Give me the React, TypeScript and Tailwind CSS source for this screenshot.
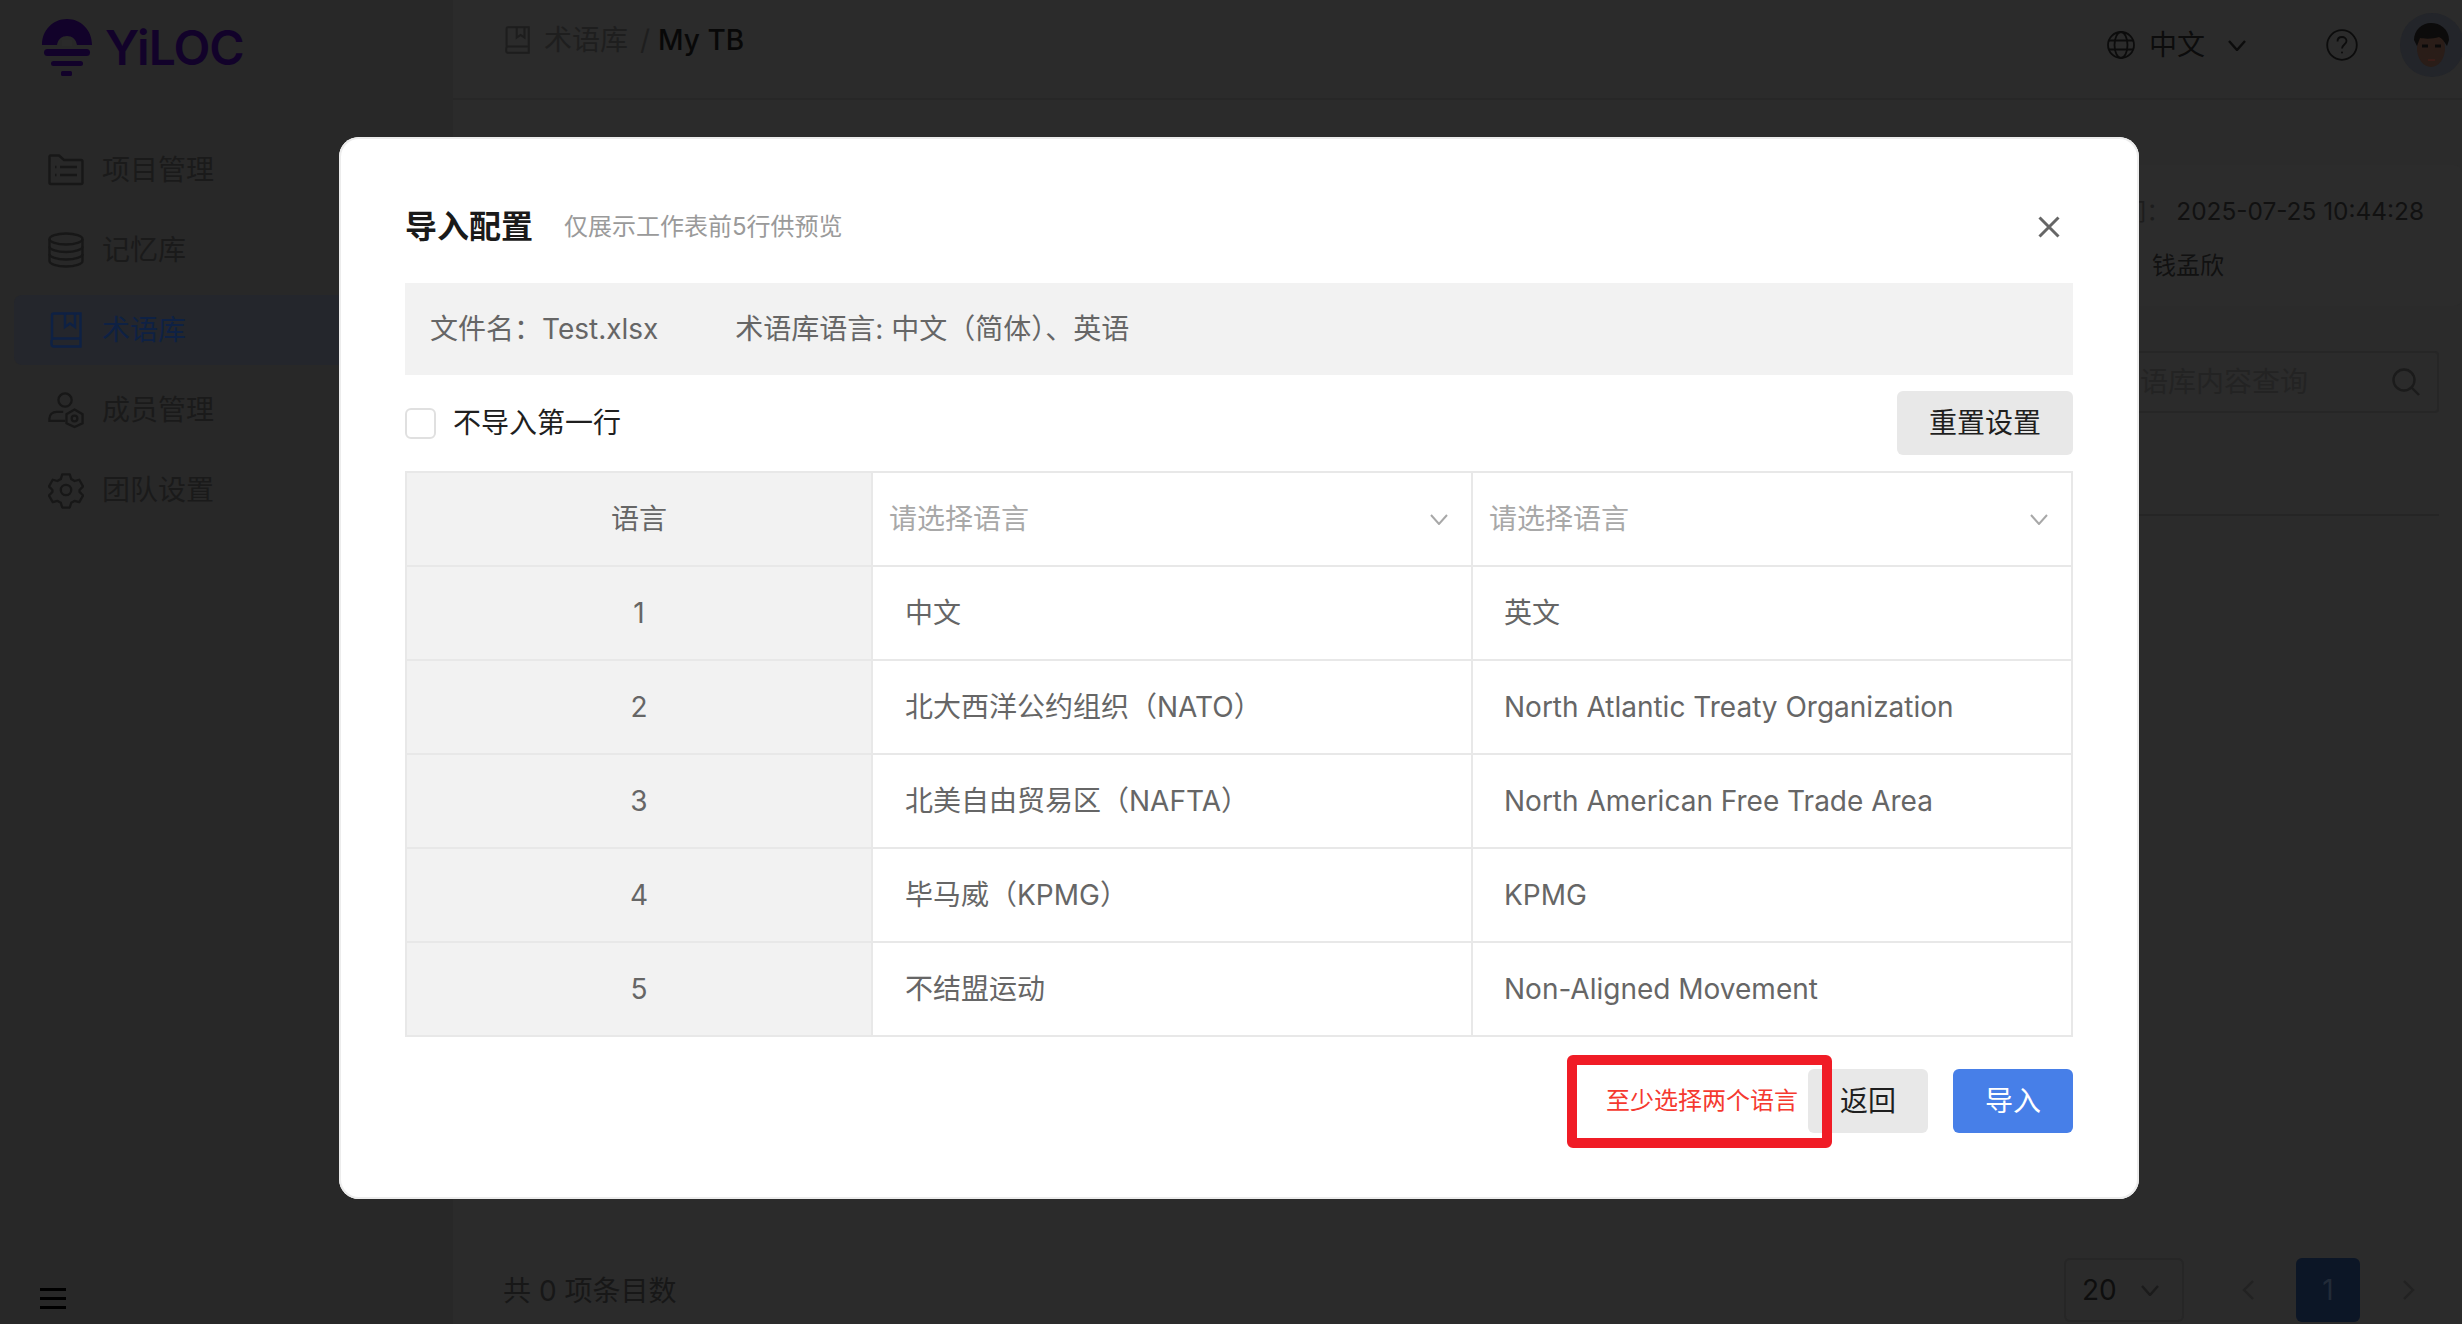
import React from "react";

const Chev = ({ w = 18, h = 11, c = "#a8a8a8", s = 2 }: { w?: number; h?: number; c?: string; s?: number }) => (
  <svg width={w} height={h} viewBox={`0 0 ${w} ${h}`} fill="none" className="shrink-0">
    <path d={`M1 1L${w / 2} ${h - 1}L${w - 1} 1`} stroke={c} strokeWidth={s} />
  </svg>
);

const Logo = () => (
  <svg width="52" height="58" viewBox="0 0 52 58" className="shrink-0">
    <path
      d="M1 27C1 12 12 1 26 1s25 11 25 26H36c-1-6-5-9-10-9s-9 3-10 9Z"
      fill="#12022a"
    />
    <rect x="21" y="22" width="10" height="6" fill="#2a2a2a" />
    <rect x="3" y="31" width="46" height="7" rx="3.5" fill="#12022a" />
    <rect x="10" y="43" width="32" height="5" rx="2.5" fill="#12022a" />
    <rect x="20" y="53" width="11" height="5" rx="1.5" fill="#12022a" />
  </svg>
);

const FolderIcon = () => (
  <svg width="36" height="32" viewBox="0 0 36 32" fill="none" stroke="#171717" strokeWidth="2.4">
    <path d="M1.5 2.5a1 1 0 0 1 1-1h8.5l5 4.5h17a1.5 1.5 0 0 1 1.5 1.5v21a1.5 1.5 0 0 1-1.5 1.5h-30a1.5 1.5 0 0 1-1.5-1.5Z" />
    <path d="M12 13h17M12 21h17M7 13h1.500M7 21h1.500" />
  </svg>
);
const DbIcon = () => (
  <svg width="36" height="36" viewBox="0 0 36 36" fill="none" stroke="#171717" strokeWidth="2.4">
    <ellipse cx="18" cy="7" rx="16.500" ry="5.500" />
    <path d="M1.500 7v22c0 3 7.500 5.500 16.500 5.500s16.500-2.500 16.500-5.500V7" />
    <path d="M1.500 14.500c0 3 7.500 5.500 16.500 5.500s16.500-2.500 16.500-5.500M1.500 22c0 3 7.500 5.500 16.500 5.500s16.500-2.500 16.500-5.500" />
  </svg>
);
const BookIcon = ({ c = "#0e2144", w = 32, h = 36, sw = 2.4 }: { c?: string; w?: number; h?: number; sw?: number }) => (
  <svg width={w} height={h} viewBox="0 0 32 36" fill="none" stroke={c} strokeWidth={sw}>
    <path d="M2 28V3a1.500 1.500 0 0 1 1.500-1.500h27V34.500H4A2.500 2.500 0 0 1 1.500 32V29a2.500 2.500 0 0 1 2.500-2.500h26.500" />
    <path d="M15 1.500V15l5-3.500 5 3.500V1.500" />
  </svg>
);
const MemberIcon = () => (
  <svg width="38" height="38" viewBox="0 0 38 38" fill="none" stroke="#171717" strokeWidth="2.4">
    <circle cx="18" cy="8.500" r="7" />
    <path d="M16 21H9c-4.500 0-7.500 3-7.500 7v2.500H18" />
    <path d="M28 18.500l8.500 5v9.500L28 37l-8.500-4v-9.500Z" />
    <circle cx="28" cy="28" r="3" />
  </svg>
);
const GearIcon = () => (
  <svg width="38" height="38" viewBox="0 0 38 38" fill="none" stroke="#171717" strokeWidth="2.4">
    <path d="M15 2.500h8l1.500 5 3.500 2 5-1.300 4 7-3.700 3.800v2l3.700 3.800-4 7-5-1.300-3.500 2-1.500 5h-8l-1.500-5-3.500-2-5 1.300-4-7 3.700-3.800v-2L1 15.200l4-7 5 1.300 3.500-2Z" strokeLinejoin="round" />
    <circle cx="19" cy="19" r="5.500" />
  </svg>
);
const GlobeIcon = () => (
  <svg width="28" height="28" viewBox="0 0 28 28" fill="none" stroke="#0c0c0c" strokeWidth="1.800">
    <circle cx="14" cy="14" r="13" />
    <ellipse cx="14" cy="14" rx="6.500" ry="13" />
    <path d="M2 9.500h24M2 18.500h24" />
  </svg>
);
const HelpIcon = () => (
  <svg width="32" height="32" viewBox="0 0 32 32" fill="none" stroke="#0c0c0c" strokeWidth="1.800">
    <circle cx="16" cy="16" r="14.800" />
    <path d="M11.500 12.500c0-2.800 2-4.500 4.500-4.500s4.500 1.800 4.500 4c0 3.500-4.500 3.500-4.500 7.500" />
    <circle cx="16" cy="23.500" r="1" fill="#0c0c0c" stroke="none" />
  </svg>
);
const SearchIcon = () => (
  <svg width="28" height="28" viewBox="0 0 28 28" fill="none" stroke="#1b1b1b" strokeWidth="2.400">
    <circle cx="12" cy="12" r="10.500" />
    <path d="M20 20l7 7" />
  </svg>
);
const Avatar = () => (
  <div className="h-[64px] w-[64px] shrink-0 overflow-hidden rounded-full bg-[#23252a]">
    <svg width="64" height="64" viewBox="0 0 64 64">
      <ellipse cx="31" cy="35" rx="14" ry="19" fill="#2a1d18" />
      <path d="M14 27c0-10 8-17 17-17s18 6 18 17l-2 6c-3-5-5-8-8-9-6 2-14 2-19 1l-3 8Z" fill="#0c0b0b" />
      <path d="M22 33h6M35 33h6" stroke="#0a0a0a" strokeWidth="3" />
      <path d="M28 47h7" stroke="#3b1d18" strokeWidth="2" />
    </svg>
  </div>
);

const nav = [
  { label: "项目管理", icon: <FolderIcon /> },
  { label: "记忆库", icon: <DbIcon /> },
  { label: "术语库", icon: <BookIcon />, active: true },
  { label: "成员管理", icon: <MemberIcon /> },
  { label: "团队设置", icon: <GearIcon /> },
];

const rows = [
  ["1", "中文", "英文"],
  ["2", "北大西洋公约组织（NATO）", "North Atlantic Treaty Organization"],
  ["3", "北美自由贸易区（NAFTA）", "North American Free Trade Area"],
  ["4", "毕马威（KPMG）", "KPMG"],
  ["5", "不结盟运动", "Non-Aligned Movement"],
];

const Cell = ({ className = "", children }: { className?: string; children: React.ReactNode }) => (
  <div className={`flex h-[94px] items-center border-b-2 border-r-2 border-[#e8e8e8] ${className}`}>{children}</div>
);

const LangSelect = () => (
  <Cell className="w-[600px] justify-between pl-[16px] pr-[23px] text-[#a8a8a8]">
    <span>请选择语言</span>
    <Chev />
  </Cell>
);

export default function App() {
  return (
    <div className="relative flex h-[1324px] w-[2462px] overflow-hidden bg-[#2b2b2b] font-['Inter','Noto_Sans_CJK_SC',sans-serif] text-[28px]">
      {/* Sidebar */}
      <aside className="flex w-[453px] shrink-0 flex-col bg-[#282828]">
        <div className="flex h-[100px] items-start gap-[12px] pl-[41px] pt-[18px]">
          <Logo />
          <span className="mt-[5px] text-[48px] font-semibold leading-[50px] tracking-[-1px] text-[#12022a]">YiLOC</span>
        </div>
        <nav className="mt-[35px] flex flex-col gap-[10px] pl-[14px] pr-[14px]">
          {nav.map((n) => (
            <div
              key={n.label}
              className={`flex h-[70px] items-center rounded-[8px] pl-[34px] ${n.active ? "bg-[#24262c] text-[#0e2144]" : "text-[#1a1a1a]"}`}
            >
              <span className="flex w-[36px] justify-center">{n.icon}</span>
              <span className="ml-[18px]">{n.label}</span>
            </div>
          ))}
        </nav>
        <div className="mt-auto ml-[40px] flex w-[26px] flex-col gap-[6px] pb-[15px]">
          <div className="h-[3px] w-[26px] bg-black" />
          <div className="h-[3px] w-[26px] bg-black" />
          <div className="h-[3px] w-[26px] bg-black" />
        </div>
      </aside>

      {/* Main */}
      <main className="flex min-w-0 flex-1 flex-col">
        <header className="flex h-[100px] shrink-0 items-start border-b-2 border-[#272727] pl-[52px]">
          <div className="mt-[25px] flex h-[30px] items-center">
            <BookIcon c="#1d1d1d" w="25" h="28" sw={2.6} />
            <span className="ml-[14px] text-[#1e1e1e]">术语库</span>
            <span className="ml-[12px] text-[#1e1e1e]">/</span>
            <span className="ml-[8px] font-medium text-[#080808]">My TB</span>
          </div>
          <div className="ml-auto flex h-[90px] items-center text-[#0c0c0c]">
            <GlobeIcon />
            <span className="ml-[14px]">中文</span>
            <span className="ml-[23px]"><Chev w={18} h={11} c="#0c0c0c" s={2.4} /></span>
            <span className="ml-[80px] flex"><HelpIcon /></span>
            <span className="-mr-[2px] ml-[42px]"><Avatar /></span>
          </div>
        </header>

        <section className="flex flex-1 flex-col pl-[50px] pr-[23px]">
          <div className="-mr-[23px] mt-[65px] flex h-[141px] flex-col rounded-[8px] bg-[#2c2c2c] pr-[38px] pt-[30px] text-[24px] leading-[32px] text-[#111111]">
            <div className="self-end">
              <span className="text-[#1d1d1d]">更新时间：</span>
              <span className="ml-[6px] text-[24.4px]">2025-07-25 10:44:28</span>
            </div>
            <div className="mr-[200px] mt-[22px] self-end">
              <span className="text-[#1d1d1d]">创建人：</span>
              <span className="text-[#111111]">钱孟欣</span>
            </div>
          </div>
          <div className="mt-[45px] flex h-[62px] w-[500px] items-center justify-between self-end rounded-[4px] border-2 border-[#262626] pl-[171px] pr-[17px] text-[#232323]">
            <span>术语库内容查询</span>
            <SearchIcon />
          </div>
          <div className="mt-[101px] h-[2px] bg-[#252525]" />
          <div className="mb-[2px] mt-auto flex h-[64px] items-center pr-[24px]">
            <span className="translate-y-[1px] text-[#171717]">共 0 项条目数</span>
            <div className="ml-auto flex h-[64px] w-[120px] items-center rounded-[6px] border-2 border-[#262626] pl-[16px] text-[#0e0e0e]">
              <span>20</span>
              <span className="ml-[24px]"><Chev w={18} h={11} c="#1b1b1b" s={2.4} /></span>
            </div>
            <svg width="12" height="20" viewBox="0 0 12 20" fill="none" className="ml-[58px]"><path d="M11 1L2 10l9 9" stroke="#222222" strokeWidth="2.400" /></svg>
            <div className="ml-[42px] flex h-[64px] w-[64px] items-center justify-center rounded-[6px] bg-[#0c1626] text-[#222b38]">1</div>
            <svg width="12" height="20" viewBox="0 0 12 20" fill="none" className="ml-[43px]"><path d="M1 1l9 9-9 9" stroke="#222222" strokeWidth="2.400" /></svg>
          </div>
        </section>
      </main>

      {/* Modal */}
      <div className="absolute left-[339px] top-[137px] h-[1062px] w-[1800px] rounded-[20px] bg-white px-[66px] shadow-[inset_0_0_0_2px_#ececec]">
        <div className="flex h-[36px] translate-y-[72px] items-center">
          <span className="text-[32px] font-semibold leading-[36px] text-[#1a1a1a]">导入配置</span>
          <span className="ml-[31px] text-[24px] text-[#9a9a9a]">仅展示工作表前5行供预览</span>
          <svg width="22" height="22" viewBox="0 0 22 22" fill="none" className="ml-auto mr-[13px]">
            <path d="M1.500 1.500l19 19M20.500 1.500l-19 19" stroke="#666666" strokeWidth="3" />
          </svg>
        </div>
        <div className="mt-[110px] flex h-[92px] items-center bg-[#f2f2f2] pl-[25px] text-[#666666]">
          <span>文件名：Test.xlsx</span>
          <span className="ml-[77px]">术语库语言: 中文（简体）、英语</span>
        </div>
        <div className="mt-[16px] flex h-[64px] items-center">
          <span className="h-[31px] w-[31px] rounded-[6px] border-2 border-[#e0e0e0] bg-white" />
          <span className="ml-[17px] text-[#1f1f1f]">不导入第一行</span>
          <button className="ml-auto h-[64px] w-[176px] rounded-[6px] bg-[#e8e8e8] text-[#1f1f1f]">重置设置</button>
        </div>

        <div className="mt-[16px] border-l-2 border-t-2 border-[#e8e8e8]">
          <div className="flex">
            <Cell className="w-[466px] justify-center bg-[#f2f2f2] text-[#666666]">语言</Cell>
            <LangSelect />
            <LangSelect />
          </div>
          {rows.map((r) => (
            <div key={r[0]} className="flex text-[#666666]">
              <Cell className="w-[466px] justify-center bg-[#f2f2f2]">{r[0]}</Cell>
              <Cell className="w-[600px] pl-[32px]">{r[1]}</Cell>
              <Cell className="w-[600px] pl-[31px]">{r[2]}</Cell>
            </div>
          ))}
        </div>

        <div className="mt-[32px] flex h-[64px] items-center justify-end">
          <span className="mr-[10px] text-[24px] text-[#f5392f]">至少选择两个语言</span>
          <button className="h-[64px] w-[120px] rounded-[6px] bg-[#e8e8e8] text-[#1f1f1f]">返回</button>
          <button className="ml-[25px] h-[64px] w-[120px] rounded-[6px] bg-[#477fe8] text-white">导入</button>
        </div>

        <div className="absolute left-[1228px] top-[918px] h-[93px] w-[265px] rounded-[6px] border-[10px] border-[#f01c26]" />
      </div>
    </div>
  );
}
